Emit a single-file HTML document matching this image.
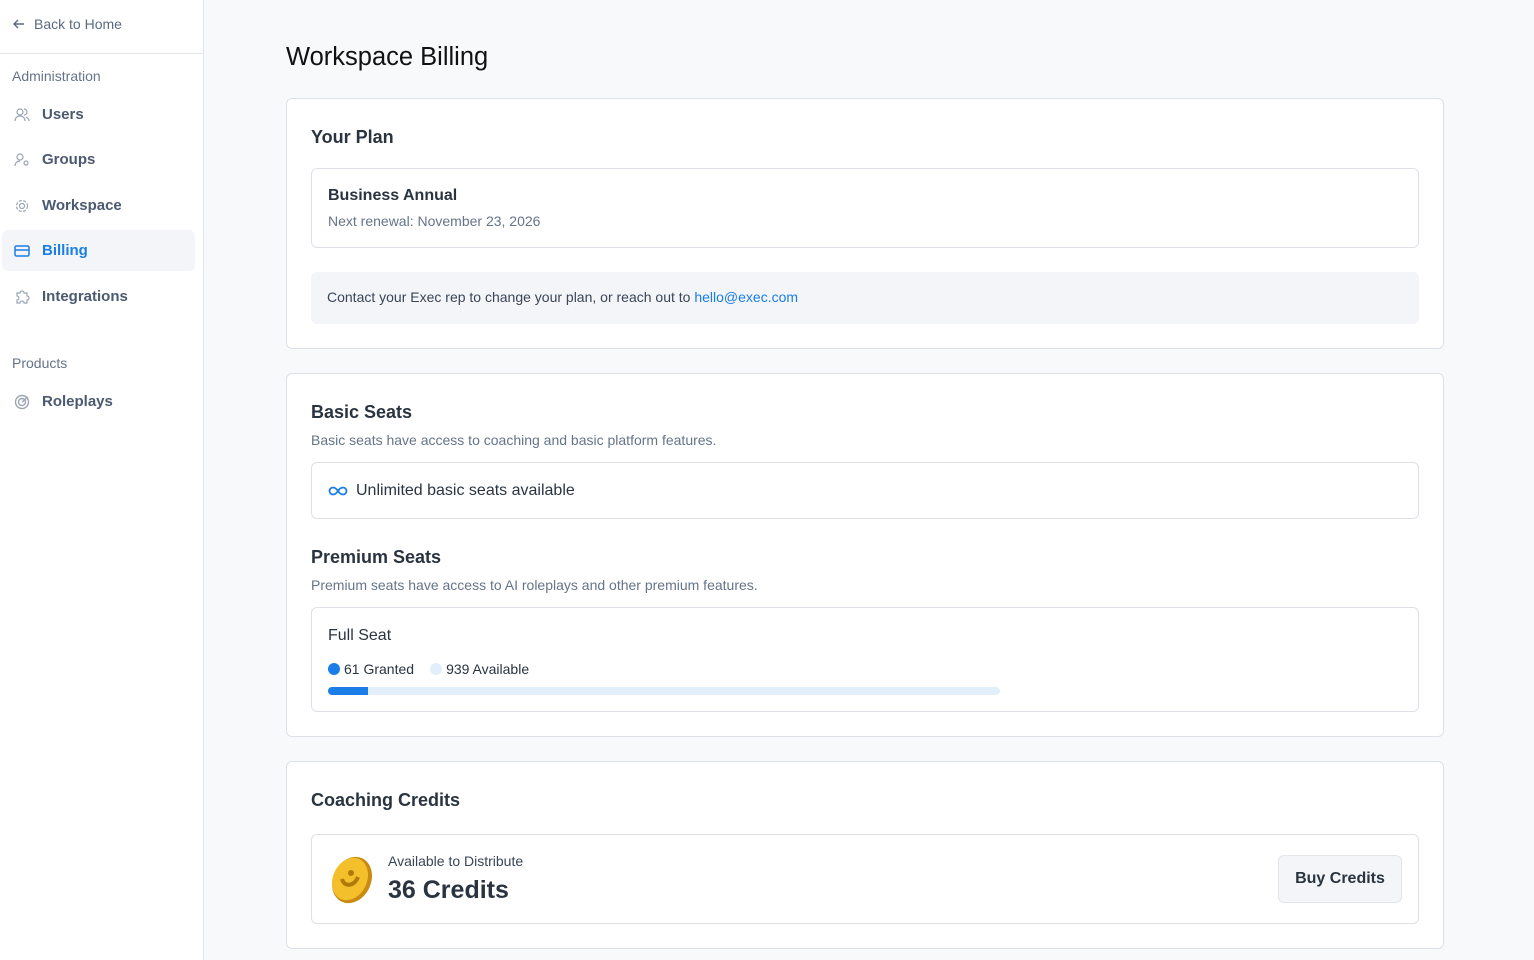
<!DOCTYPE html>
<html><head><style>
*{box-sizing:border-box;margin:0;padding:0}
body{width:1534px;height:960px;overflow:hidden;font-family:"Liberation Sans",sans-serif;background:#f8f9fb;color:#1f2937;position:relative}
.side{position:absolute;left:0;top:0;width:204px;height:960px;background:#fff;border-right:1px solid #e2e5ea}
.back{height:54px;border-bottom:1px solid #e2e5ea;display:flex;align-items:center;padding-left:12px;padding-bottom:6px;font-size:14px;color:#5a6a80}
.sec{font-size:14px;color:#66748a;position:absolute;left:12px}
.item{position:absolute;left:2px;width:193px;height:41px;display:flex;align-items:center;padding-left:12px;font-size:15px;font-weight:bold;color:#4b5a70;border-radius:6px}
.item svg{margin-right:12px}
.item.act{background:#f3f5f8;color:#1a7ee6}
h1{position:absolute;left:286px;top:43px;font-size:25.5px;font-weight:normal;color:#111}
.card{position:absolute;left:286px;width:1158px;background:#fff;border:1px solid #dde1e7;border-radius:6px}
.h{position:absolute;left:24px;font-size:18px;font-weight:bold;color:#2a3441}
.box{position:absolute;left:24px;right:24px;border:1px solid #dde1e7;border-radius:6px;background:#fff}
.sub{position:absolute;left:24px;font-size:14px;color:#66748a}
</style></head><body>
<div class="side">
<div class="back"><svg width="14" height="14" viewBox="0 0 14 14" fill="none" stroke="#5a6a80" stroke-width="1.4" style="margin-right:8px"><path d="M12 7H2M6 3L2 7l4 4"/></svg>Back to Home</div>
<div class="sec" style="top:68px">Administration</div>
<div class="item" style="top:94px"><svg width="16" height="16" viewBox="0 0 16 16" fill="none" stroke="#9aa5b4" stroke-width="1.2"><circle cx="6" cy="5" r="3"/><path d="M1 14c0-3 2-5 5-5s5 2 5 5M10 2a3 3 0 010 6M12 10c2 1 3 2 3 4"/></svg>Users</div>
<div class="item" style="top:139px"><svg width="16" height="16" viewBox="0 0 16 16" fill="none" stroke="#9aa5b4" stroke-width="1.2"><circle cx="6" cy="5" r="3"/><path d="M1 14c0-3 2-5 5-5"/><circle cx="12" cy="11" r="2"/></svg>Groups</div>
<div class="item" style="top:185px"><svg width="16" height="16" viewBox="0 0 16 16" fill="none" stroke="#9aa5b4" stroke-width="1.2"><circle cx="8" cy="8" r="2.5"/><circle cx="8" cy="8" r="5.5" stroke-dasharray="3 1.5"/></svg>Workspace</div>
<div class="item act" style="top:230px"><svg width="16" height="16" viewBox="0 0 16 16" fill="none" stroke="#1a7ee6" stroke-width="1.5"><rect x="1" y="3" width="14" height="10" rx="1.5"/><path d="M1 7h14"/></svg>Billing</div>
<div class="item" style="top:276px"><svg width="16" height="16" viewBox="0 0 16 16" fill="none" stroke="#9aa5b4" stroke-width="1.2"><path d="M3 4h3a2 2 0 014 0h3v3a2 2 0 010 4v3h-3a2 2 0 00-4 0H3v-3a2 2 0 000-4z"/></svg>Integrations</div>
<div class="sec" style="top:355px">Products</div>
<div class="item" style="top:381px"><svg width="16" height="16" viewBox="0 0 16 16" fill="none" stroke="#9aa5b4" stroke-width="1.4"><circle cx="8" cy="8" r="6.5"/><circle cx="8" cy="8" r="3.5"/><path d="M8 8l6-5"/></svg>Roleplays</div>
</div>
<h1>Workspace Billing</h1>
<div class="card" style="top:98px;height:251px">
<div class="h" style="top:28px">Your Plan</div>
<div class="box" style="top:69px;height:80px">
<div style="position:absolute;left:16px;top:18px;font-size:16px;font-weight:bold;color:#2a3441">Business Annual</div>
<div style="position:absolute;left:16px;top:44px;font-size:14px;color:#66748a">Next renewal: November 23, 2026</div></div>
<div style="position:absolute;left:24px;right:24px;top:173px;height:52px;background:#f3f5f9;border-radius:6px;padding:17px 16px;font-size:14px;color:#3a4555">Contact your Exec rep to change your plan, or reach out to <span style="color:#1a7ee6">hello@exec.com</span></div>
</div>
<div class="card" style="top:373px;height:364px">
<div class="h" style="top:28px">Basic Seats</div>
<div class="sub" style="top:58px">Basic seats have access to coaching and basic platform features.</div>
<div class="box" style="top:88px;height:57px;display:flex;align-items:center;padding-left:16px;font-size:16px;color:#2a3441"><svg width="20" height="10" viewBox="0 0 20 10" fill="none" stroke="#1a7ee6" stroke-width="1.8" style="margin-right:8px"><path d="M10 5C8 2 6 1.5 5 1.5a3.5 3.5 0 000 7c1 0 3-.5 5-3.5s4-3.5 5-3.5a3.5 3.5 0 010 7c-1 0-3-.5-5-3.5z"/></svg>Unlimited basic seats available</div>
<div class="h" style="top:173px">Premium Seats</div>
<div class="sub" style="top:203px">Premium seats have access to AI roleplays and other premium features.</div>
<div class="box" style="top:233px;height:105px">
<div style="position:absolute;left:16px;top:19px;font-size:16px;color:#2a3441">Full Seat</div>
<div style="position:absolute;left:16px;top:53px;font-size:14px;color:#2a3441;display:flex;align-items:center"><span style="width:12px;height:12px;border-radius:50%;background:#1a7ee6;margin-right:4px"></span>61 Granted<span style="width:12px;height:12px;border-radius:50%;background:#e3eefb;margin:0 4px 0 16px"></span>939 Available</div>
<div style="position:absolute;left:16px;top:79px;width:672px;height:8px;border-radius:4px;background:#e3eefb;overflow:hidden"><div style="width:40px;height:8px;background:#1a7ee6"></div></div>
</div></div>
<div class="card" style="top:761px;height:188px">
<div class="h" style="top:28px">Coaching Credits</div>
<div class="box" style="top:72px;height:90px">
<svg style="position:absolute;left:16px;top:20px" width="46" height="50" viewBox="0 0 46 50"><ellipse cx="24" cy="25" rx="19" ry="24" fill="#c88a10" transform="rotate(25 24 25)"/><ellipse cx="22" cy="24" rx="17" ry="22" fill="#f3c02c" transform="rotate(25 22 24)"/><path d="M14 24c2 8 12 8 16 -2" stroke="#b07a0a" stroke-width="4" fill="none"/><circle cx="23" cy="18" r="3" fill="#b07a0a"/></svg>
<div style="position:absolute;left:76px;top:18px;font-size:14px;color:#3a4555">Available to Distribute</div>
<div style="position:absolute;left:76px;top:41px;font-size:25px;font-weight:bold;color:#2a3441">36 Credits</div>
<div style="position:absolute;right:16px;top:20px;width:124px;height:48px;border:1px solid #e2e5ea;background:#f3f5f8;border-radius:6px;display:flex;align-items:center;justify-content:center;font-size:16px;font-weight:bold;color:#2a3441">Buy Credits</div>
</div></div>
</body></html>
